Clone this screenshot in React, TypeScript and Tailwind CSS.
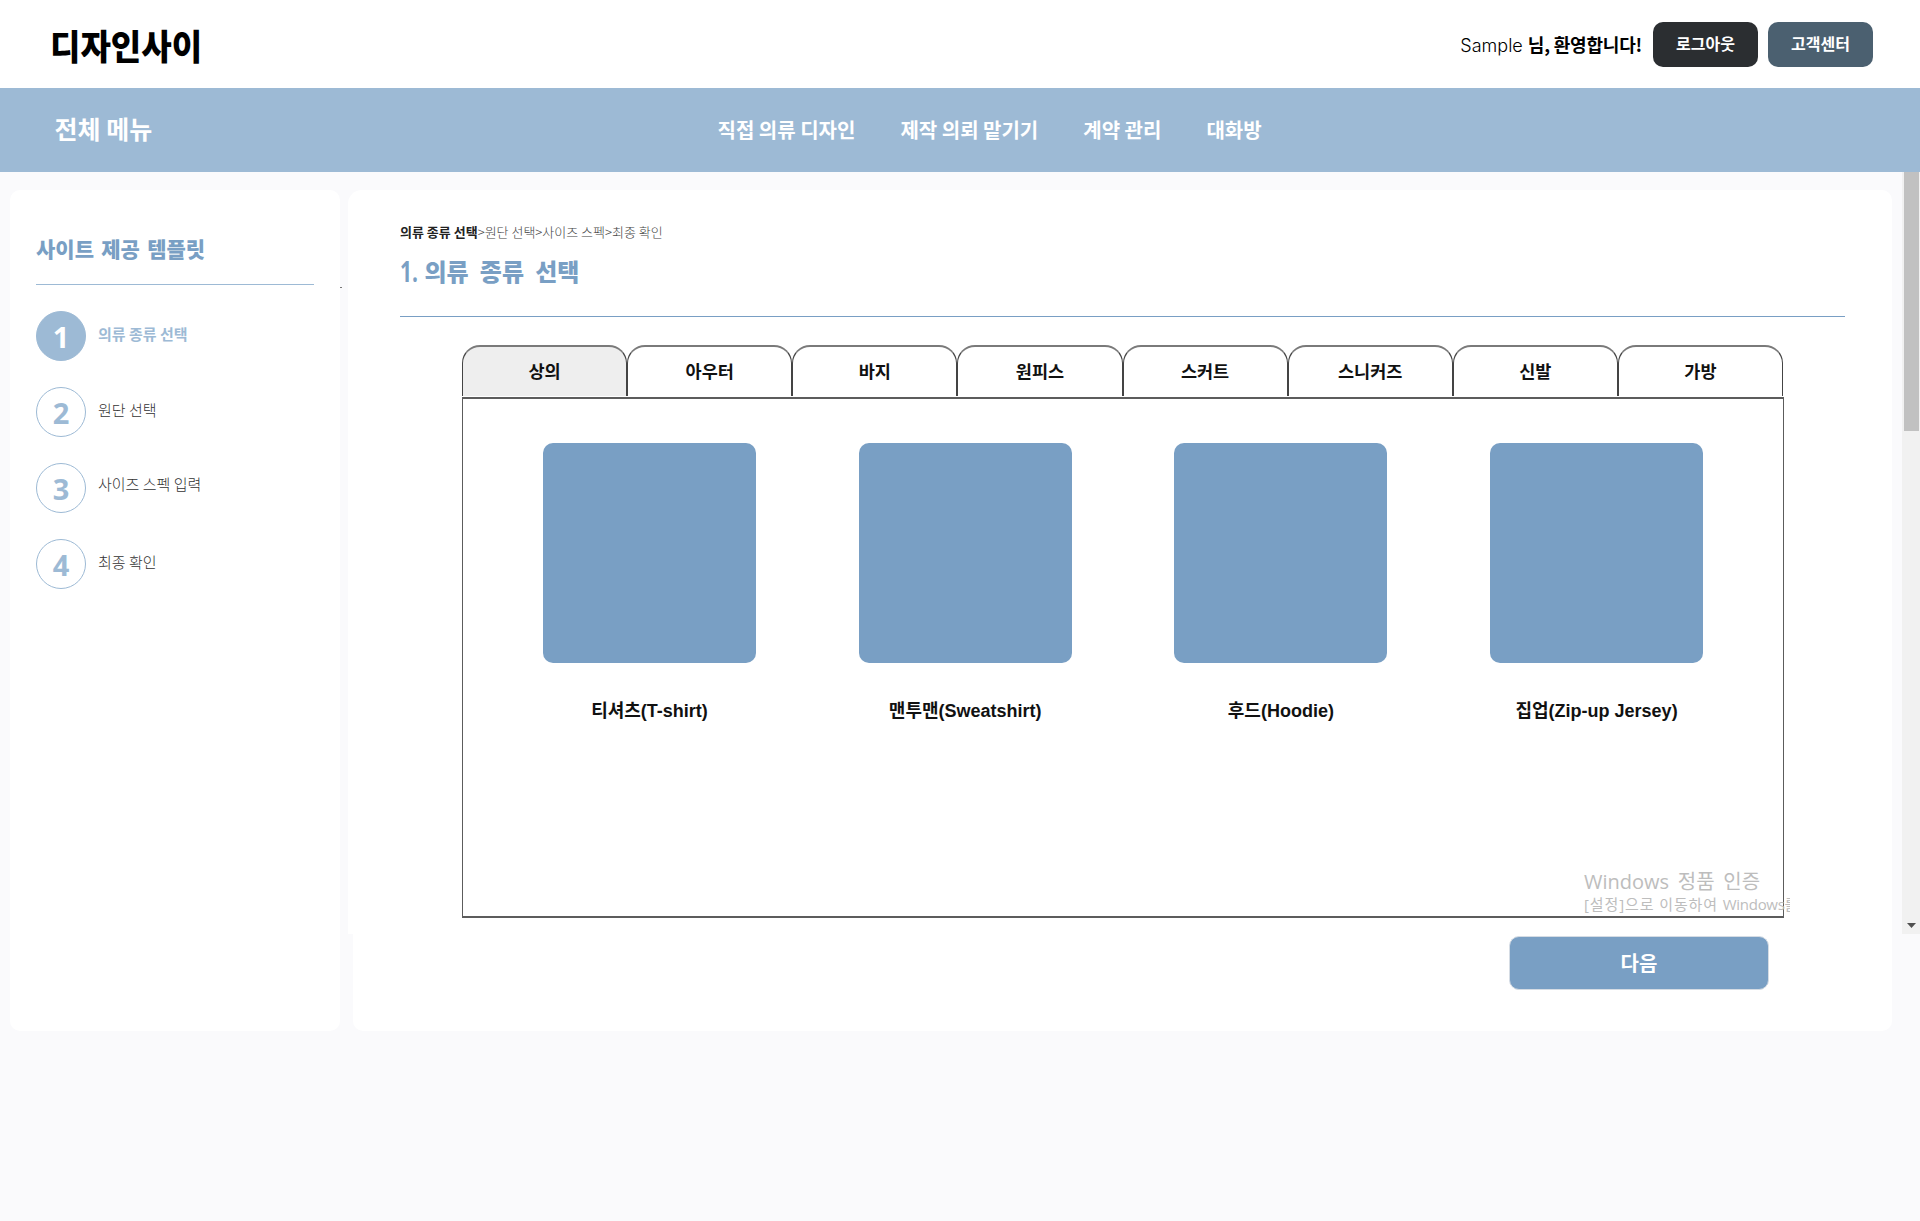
const KR = "font-[family-name:'Noto_Sans_CJK_KR',sans-serif]";

const navItems = ["직접 의류 디자인", "제작 의뢰 맡기기", "계약 관리", "대화방"];

const steps = [
  { n: 1, label: "의류 종류 선택", shift: "-mt-[5px]" },
  { n: 2, label: "원단 선택", shift: "-mt-[5px]" },
  { n: 3, label: "사이즈 스펙 입력", shift: "-mt-[9px]" },
  { n: 4, label: "최종 확인", shift: "-mt-[5px]" },
];

const tabs = ["상의", "아우터", "바지", "원피스", "스커트", "스니커즈", "신발", "가방"];

const products = ["티셔츠(T-shirt)", "맨투맨(Sweatshirt)", "후드(Hoodie)", "집업(Zip-up Jersey)"];

function Header() {
  return (
    <header className="flex h-[88px] items-start justify-between bg-white pl-[50px] pr-[47px]">
      <h1 className="mt-[27px] h-[35px] origin-left scale-x-[0.945] text-[35px] leading-[35px] font-black whitespace-nowrap text-black">
        디자인사이
      </h1>
      <div className="mt-[22px] flex h-[45px] items-center">
        <p className="mr-[11px] text-[18px] leading-[43px] whitespace-nowrap text-black">
          <span className="font-[family-name:'Inter',sans-serif] text-[18px] font-light">Sample </span>
          <span className="font-bold tracking-[-0.2px]">님, 환영합니다!</span>
        </p>
        <button className="mr-[10px] h-[45px] w-[105px] rounded-[10px] bg-[#2b2e31] pb-[3px] text-[16px] font-bold text-white">로그아웃</button>
        <button className="h-[45px] w-[105px] rounded-[10px] bg-[#4b6070] pb-[3px] text-[16px] font-bold text-white">고객센터</button>
      </div>
    </header>
  );
}

function Nav() {
  return (
    <nav className="flex h-[84px] items-center bg-[#9dbad5] pl-[54.5px] font-bold whitespace-nowrap text-white">
      <span className="w-[663px] pb-[4px] text-[25px] leading-none">전체 메뉴</span>
      <ul className="flex gap-[45px] text-[20px] leading-none">
        {navItems.map((t) => (
          <li key={t}>{t}</li>
        ))}
      </ul>
    </nav>
  );
}

function Sidebar() {
  return (
    <aside className="h-[841px] w-[330px] shrink-0 rounded-[10px] bg-white px-[26px] pt-[46px]">
      <h2 className="h-[48px] text-[21px] leading-[24px] font-black [word-spacing:2.5px] text-[#799fc4]">사이트 제공 템플릿</h2>
      <div className="h-px w-[278px] bg-[#9dbad5]" />
      <ol className="mt-[26px] flex flex-col gap-[26px]">
        {steps.map((s) => (
          <li key={s.n} className="flex h-[50px] items-center gap-[12px]">
            <span
              className={
                "flex size-[50px] items-center justify-center rounded-full border border-[#9dbad5] font-[family-name:'Open_Sans',sans-serif] text-[29px] leading-none font-bold " +
                (s.n === 1 ? "bg-[#9dbad5] text-white" : "text-[#9dbad5]")
              }
            >
              {s.n}
            </span>
            <span
              className={
                "text-[15px] leading-none " + s.shift + (s.n === 1 ? " font-bold text-[#9dbad5]" : " font-light text-[#333]")
              }
            >
              {s.label}
            </span>
          </li>
        ))}
      </ol>
    </aside>
  );
}

function Watermark() {
  return (
    <div className="absolute right-[-7px] bottom-[1px] w-[206px] font-[family-name:'Open_Sans','Noto_Sans_CJK_KR',sans-serif] whitespace-nowrap text-[#bdbdbd]">
      <p className="text-[20px] leading-[23px] [word-spacing:3.5px]">Windows 정품 인증</p>
      <p className="overflow-hidden text-[15px] leading-[22px] tracking-[0.9px]">
        [설정]으로 이동하여 <span className="tracking-[-0.3px]">Windows를</span>
      </p>
    </div>
  );
}

function Catalog() {
  return (
    <div className="ml-[62px] w-[1322px]">
      <div className="flex h-[51px] w-[1321px]">
        {tabs.map((t, i) => (
          <div
            key={t}
            className={
              "flex flex-1 items-center justify-center rounded-t-[18px] border border-t-2 border-b-0 border-x-[#444] border-t-[#7a7a7a] pb-[2px] text-[17.5px] leading-none font-bold text-[#111] " +
              (i === 0 ? "bg-[#eee]" : "bg-white")
            }
          >
            {t}
          </div>
        ))}
      </div>
      <div className="relative mt-px h-[521px] border border-t-2 border-b-2 border-[#5c5c5c]">
        <ul className="flex gap-[102.7px] pt-[44px] pl-[80px]">
          {products.map((p) => (
            <li key={p} className="flex w-[213px] flex-col items-center">
              <div className="h-[220px] w-full rounded-[10px] bg-[#799fc4]" />
              <span className="mt-[38px] font-[family-name:'Liberation_Sans','Noto_Sans_CJK_KR',sans-serif] text-[18px] leading-[20px] font-bold whitespace-nowrap text-[#111]">
                {p}
              </span>
            </li>
          ))}
        </ul>
        <Watermark />
      </div>
    </div>
  );
}

function Main() {
  return (
    <main className="relative ml-[8px] h-[841px] w-[1544px] shrink-0">
      <div className="absolute top-[97px] -left-[8px] h-px w-[2px] bg-[#777]" />
      <div className="h-[744px] rounded-tl-[14px] rounded-tr-[10px] bg-white pt-[33px] pl-[52px]">
        <p className="text-[13px] leading-[18px] font-light text-[#444]">
          <b className="font-bold text-[#222]">의류 종류 선택</b>&gt;원단 선택&gt;사이즈 스펙&gt;최종 확인
        </p>
        <h2 className="mt-[16px] flex h-[59px] text-[24px] leading-[28px] font-black [word-spacing:5.7px] text-[#799fc4]">
          <span className="w-[24.5px] origin-left scale-x-[0.72] font-[family-name:'Open_Sans',sans-serif] text-[29px] font-bold">1.</span>
          의류 종류 선택
        </h2>
        <div className="mb-[28px] h-px w-[1445px] bg-[#799fc4]" />
        <Catalog />
      </div>
      <div className="ml-[5px] h-[97px] rounded-b-[10px] bg-white pt-[2px]">
        <button className="ml-[1156px] block h-[54px] w-[260px] rounded-[10px] border border-[#d5dce4] bg-[#799fc4] text-[20px] leading-none font-bold text-white">
          다음
        </button>
      </div>
    </main>
  );
}

function Scrollbar() {
  return (
    <div className="ml-auto flex h-[762px] w-[18px] flex-col items-center justify-between bg-[#f1f1f1]">
      <div className="h-[259px] w-[15px] bg-[#c1c1c1]" />
      <svg className="mb-[6px]" width="9" height="5" viewBox="0 0 9 5">
        <path d="M0 0h9L4.5 5z" fill="#505050" />
      </svg>
    </div>
  );
}

export default function App() {
  return (
    <div className={"h-[1221px] w-[1920px] overflow-hidden bg-[#fafafc] " + KR}>
      <Header />
      <Nav />
      <div className="flex pl-[10px]">
        <div className="mt-[18px] flex">
          <Sidebar />
          <Main />
        </div>
        <Scrollbar />
      </div>
    </div>
  );
}
